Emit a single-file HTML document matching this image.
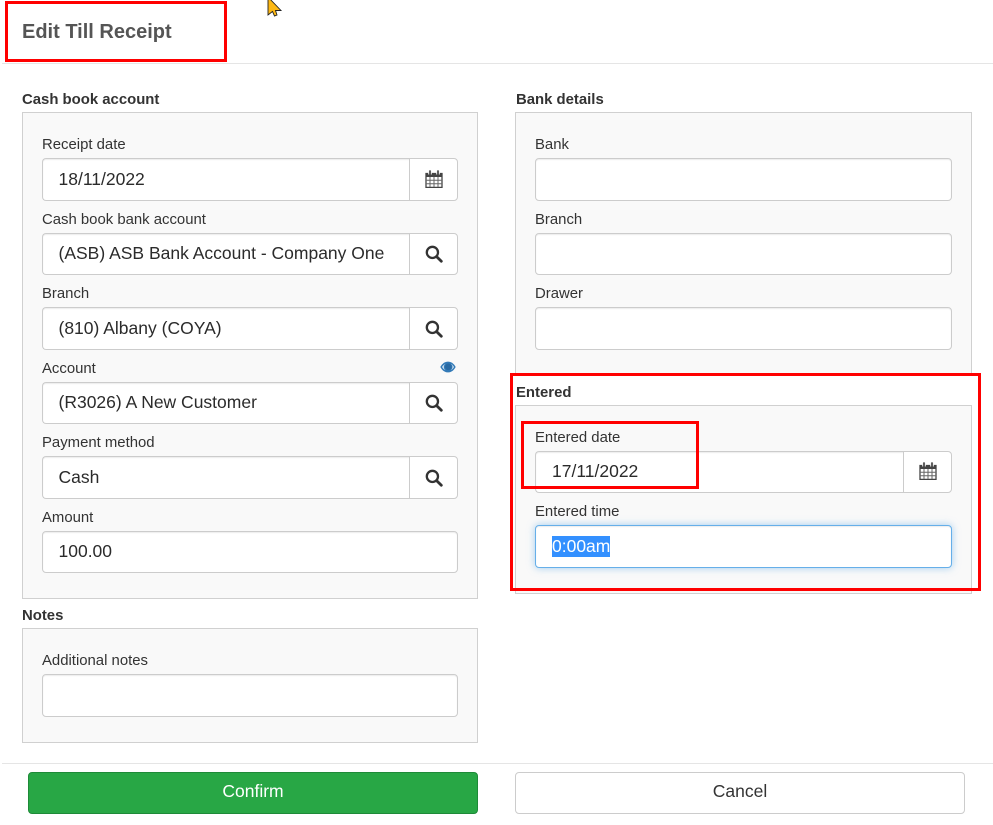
<!DOCTYPE html>
<html>
<head>
<meta charset="utf-8">
<style>
html,body{margin:0;padding:0;background:#fff;}
body{width:993px;height:825px;position:relative;overflow:hidden;font-family:"Liberation Sans",Arial,sans-serif;color:#333;}
.a,.panel,.inp,.addon,.lab,.head,.rule,.red,.btn,svg.i{position:absolute;box-sizing:border-box;}
.rule{height:1px;background:#e5e5e5;left:2px;right:0;}
.panel{background:#f9f9f9;border:1px solid #d0d0d0;}
.inp{background:#fff;border:1px solid #ccc;border-radius:4px;box-shadow:inset 0 1px 1px rgba(0,0,0,.075);font-size:17.5px;line-height:40px;padding-left:15.5px;color:#2b2b2b;white-space:nowrap;overflow:hidden;}
.inp.s{line-height:38px;}
.inp.g{border-radius:4px 0 0 4px;border-right:0;}
.addon{background:#fff;border:1px solid #ccc;border-radius:0 4px 4px 0;}
.lab{font-size:14.9px;line-height:20px;color:#333;white-space:nowrap;}
.head{font-size:14.9px;line-height:20px;font-weight:bold;color:#333;white-space:nowrap;}
.red{border:3px solid #f00;}
.btn{font-size:17.5px;line-height:37px;text-align:center;border-radius:4px;border:1px solid;}
</style>
</head>
<body>
<svg width="0" height="0" style="position:absolute">
<defs>
<symbol id="cal" viewBox="0 0 18 18">
<path d="M1 3.500H17V17.400H1Z" fill="#fff" stroke="#444" stroke-width="1.300"/>
<path d="M1 3H17V7H1Z" fill="#444"/>
<path d="M1 10.300H17M1 13.800H17M5 7V17M9 7V17M13 7V17" stroke="#666" stroke-width="1" fill="none"/>
<path d="M5 .8V4.500M13 .8V4.500" stroke="#f4f4f4" stroke-width="3.600"/>
<path d="M5 1V4.500M13 1V4.500" stroke="#444" stroke-width="1.700" stroke-linecap="round"/>
</symbol>
<symbol id="mag" viewBox="0 0 18 18">
<circle cx="7.400" cy="7.400" r="5.600" fill="none" stroke="#333" stroke-width="2.300"/>
<path d="M11.600 11.600L16.300 16.300" stroke="#333" stroke-width="2.800" stroke-linecap="round"/>
</symbol>
</defs>
</svg>

<div class="rule" style="top:63px"></div>
<div class="a" style="left:22px;top:20px;font-size:20px;line-height:24px;font-weight:bold;color:#555;white-space:nowrap">Edit Till Receipt</div>

<div class="head" style="left:22px;top:90px">Cash book account</div>
<div class="panel" style="left:22px;top:112px;width:456px;height:487px"></div>

<div class="lab" style="left:42px;top:135px">Receipt date</div>
<div class="inp g" style="left:42px;top:158px;width:368px;height:43px">18/11/2022</div>
<div class="addon" style="left:409px;top:158px;width:49px;height:43px"></div>
<svg class="i" style="left:425px;top:170px" width="18" height="18"><use href="#cal"/></svg>

<div class="lab" style="left:42px;top:210px">Cash book bank account</div>
<div class="inp g s" style="left:42px;top:233px;width:368px;height:42px">(ASB) ASB Bank Account - Company One</div>
<div class="addon" style="left:409px;top:233px;width:49px;height:42px"></div>
<svg class="i" style="left:425px;top:245px" width="18" height="18"><use href="#mag"/></svg>

<div class="lab" style="left:42px;top:284px">Branch</div>
<div class="inp g" style="left:42px;top:307px;width:368px;height:43px">(810) Albany (COYA)</div>
<div class="addon" style="left:409px;top:307px;width:49px;height:43px"></div>
<svg class="i" style="left:425px;top:320px" width="18" height="18"><use href="#mag"/></svg>

<div class="lab" style="left:42px;top:359px">Account</div>
<svg class="i" style="left:440px;top:361px" width="16" height="12" viewBox="0 0 16 12"><path d="M.3 6C2.300 2.300 5 .6 8 .6S13.700 2.300 15.700 6C13.700 9.700 11 11.400 8 11.400S2.300 9.700.3 6Z" fill="#337ab7"/><path d="M2 6C3 4.300 4.300 3.200 5.600 2.700A4 4 0 0 0 5.600 9.300C4.300 8.800 3 7.700 2 6Z" fill="#d5e4f1"/><path d="M11 2.900C12.200 3.500 13.200 4.500 14 6C13.200 7.500 12.200 8.500 11 9.100A4 4 0 0 0 11 2.900Z" fill="#d5e4f1"/><circle cx="8.300" cy="5.800" r="3.300" fill="#2a6aa3"/></svg>
<div class="inp g s" style="left:42px;top:382px;width:368px;height:42px">(R3026) A New Customer</div>
<div class="addon" style="left:409px;top:382px;width:49px;height:42px"></div>
<svg class="i" style="left:425px;top:394px" width="18" height="18"><use href="#mag"/></svg>

<div class="lab" style="left:42px;top:433px">Payment method</div>
<div class="inp g" style="left:42px;top:456px;width:368px;height:43px">Cash</div>
<div class="addon" style="left:409px;top:456px;width:49px;height:43px"></div>
<svg class="i" style="left:425px;top:469px" width="18" height="18"><use href="#mag"/></svg>

<div class="lab" style="left:42px;top:508px">Amount</div>
<div class="inp s" style="left:42px;top:531px;width:416px;height:42px">100.00</div>

<div class="head" style="left:22px;top:606px">Notes</div>
<div class="panel" style="left:22px;top:628px;width:456px;height:115px"></div>
<div class="lab" style="left:42px;top:651px">Additional notes</div>
<div class="inp" style="left:42px;top:674px;width:416px;height:43px"></div>

<div class="head" style="left:516px;top:90px">Bank details</div>
<div class="panel" style="left:515px;top:112px;width:457px;height:270px"></div>
<div class="lab" style="left:535px;top:135px">Bank</div>
<div class="inp" style="left:535px;top:158px;width:417px;height:43px"></div>
<div class="lab" style="left:535px;top:210px">Branch</div>
<div class="inp" style="left:535px;top:233px;width:417px;height:42px"></div>
<div class="lab" style="left:535px;top:284px">Drawer</div>
<div class="inp" style="left:535px;top:307px;width:417px;height:43px"></div>

<div class="a" style="left:513px;top:376px;width:465px;height:29px;background:#fff"></div>
<div class="head" style="left:516px;top:383px">Entered</div>
<div class="panel" style="left:515px;top:405px;width:457px;height:189px"></div>
<div class="lab" style="left:535px;top:428px">Entered date</div>
<div class="inp g s" style="left:535px;top:451px;width:369px;height:42px;padding-left:16px">17/11/2022</div>
<div class="addon" style="left:903px;top:451px;width:49px;height:42px"></div>
<svg class="i" style="left:919px;top:462px" width="18" height="18"><use href="#cal"/></svg>

<div class="lab" style="left:535px;top:502px">Entered time</div>
<div class="inp" style="left:535px;top:525px;width:417px;height:43px;border-color:#66afe9;box-shadow:inset 0 1px 1px rgba(0,0,0,.075),0 0 8px rgba(102,175,233,.6);padding-left:16px;padding-top:1px"><span style="background:#3390ff;color:#fff;display:inline-block;line-height:21px;vertical-align:1px">0:00am</span></div>

<div class="rule" style="top:763px"></div>
<div class="btn" style="left:28px;top:772px;width:450px;height:42px;background:#28a745;border-color:#1e8a38;color:#fff">Confirm</div>
<div class="btn" style="left:515px;top:772px;width:450px;height:42px;background:#fff;border-color:#ccc;color:#333">Cancel</div>

<div class="red" style="left:5px;top:1px;width:222px;height:61px"></div>
<div class="red" style="left:510px;top:373px;width:471px;height:218px"></div>
<div class="red" style="left:521px;top:421px;width:178px;height:68px"></div>

<svg class="i" style="left:266px;top:0" width="17" height="18" viewBox="0 0 17 18"><path d="M2 -3V15L6.500 11.500L8.500 16L11 15L9.500 10.500H15Z" fill="#fdb813" stroke="#222" stroke-width=".9"/></svg>

</body>
</html>
